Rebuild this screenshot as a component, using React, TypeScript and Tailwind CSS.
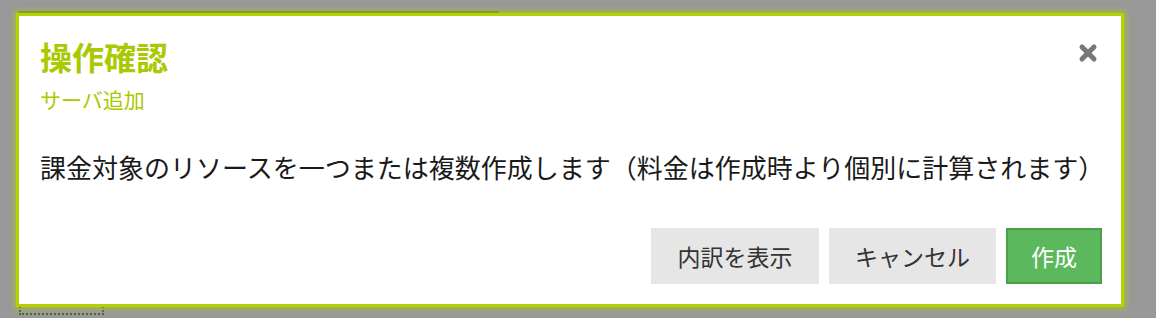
import React from "react";

const font = { fontFamily: '"Noto Sans CJK JP", "Noto Sans", sans-serif' };

export default function App() {
  return (
    <div
      className="relative w-[1156px] h-[318px] bg-[#999999] overflow-hidden"
      style={font}
    >
      {/* background content behind the dialog */}
      <div className="flex flex-col pl-[19px] pt-[11px]">
        <div className="w-[480px] h-[4px] bg-[#5a8a3c]" />
        <div className="w-[85px] h-[300px] border-[2px] border-dotted border-[#3f6b2e]" />
      </div>

      {/* dialog */}
      <div className="absolute left-[16px] top-[13px] w-[1108px] h-[294px] bg-white border-[3px] border-[#b4d200] shadow-[0_0_6px_2px_rgba(180,210,0,0.55)] flex flex-col">
        <div className="flex justify-between pl-[21px] pr-[20px] pt-[22px]">
          <div className="flex flex-col">
            <div className="text-[32px] leading-[37px] font-bold text-[#a9c900]">
              操作確認
            </div>
            <div className="mt-[10px] text-[21px] leading-[28px] text-[#a9c900]">
              サーバ追加
            </div>
          </div>
          <button className="mt-[5px] mr-[3px] w-[20px] h-[20px] flex items-start justify-center">
            <svg width="20" height="20" viewBox="0 0 20 20">
              <path
                d="M4 4 L16 16 M16 4 L4 16"
                stroke="#777777"
                strokeWidth="5"
                strokeLinecap="round"
              />
            </svg>
          </button>
        </div>
        <div className="mt-[37px] pl-[21px] text-[26px] leading-[34px] text-[#1a1a1a] whitespace-nowrap">
          課金対象のリソースを一つまたは複数作成します（料金は作成時より個別に計算されます）
        </div>
        <div className="mt-[44px] flex justify-end gap-[10px] pr-[19px]">
          <button className="h-[56px] w-[168px] bg-[#e6e6e6] text-[23px] text-[#333333]">
            内訳を表示
          </button>
          <button className="h-[56px] w-[167px] bg-[#e6e6e6] text-[23px] text-[#333333]">
            キャンセル
          </button>
          <button className="h-[56px] w-[96px] bg-[#5cb85c] border-[2px] border-[#4a9f4a] text-[23px] text-white">
            作成
          </button>
        </div>
      </div>
    </div>
  );
}
